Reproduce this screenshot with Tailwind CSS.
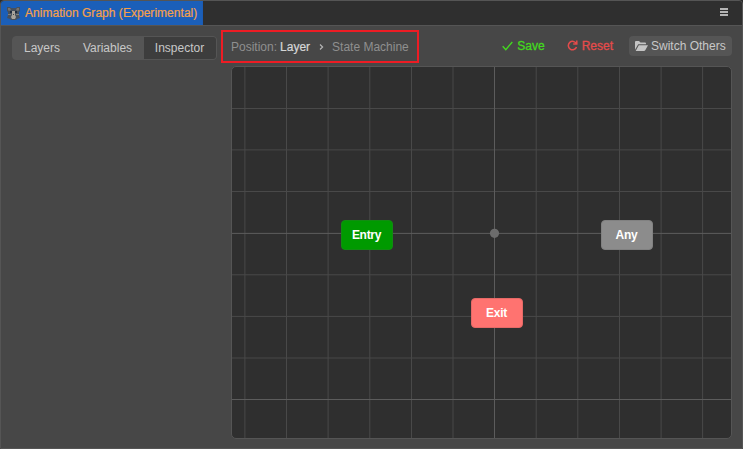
<!DOCTYPE html>
<html lang="en">
<head>
<meta charset="utf-8">
<title>Animation Graph</title>
<script src="https://cdn.jsdelivr.net/npm/@tailwindcss/browser@4"></script>
</head>
<body class="bg-[#2b2b2b] font-['Liberation_Sans',Arial,sans-serif] text-[12px] leading-4 text-[#c8c8c8]">
<div class="flex h-[449px] w-[743px] flex-col overflow-hidden rounded-t border border-[#555] bg-[#474747]">
  <header class="flex h-[25px] shrink-0 items-stretch justify-between border-b border-[#555] bg-[#2f2f2f]">
    <div class="flex w-[202px] items-center gap-[5px] border-r border-[#1b5cb4] bg-[#1b5fb9] pl-[6px] text-[#f5a04a]">
      <svg class="size-[13px] shrink-0" viewBox="0 0 13 13"><path d="M0 0h3l1 1h5l1-1h3v4l-1 1v3l1 3-3 1-1 1H4l-1-1-3-1 1-3V5L0 4z" fill="#47505c"/><path d="M1 1h2l1 2-2 1-1-1zM10 1h2v2l-1 1-2-1z" fill="#77736e"/><path d="M3 4h2v2H3zM8 4h2v2H8z" fill="#202b3b"/><path d="M1 7h3v1H1zM9 7h3v1H9z" fill="#858076"/><path d="M5 4h3v4l1 2-1 2H5l-1-2 1-2z" fill="#aaa49b"/><path d="M6 7h1v1H6z" fill="#444"/></svg>
      <span class="whitespace-nowrap tracking-[0.03px] [-webkit-text-stroke:0.2px]">Animation Graph (Experimental)</span>
    </div>
    <svg class="mt-[7px] mr-[14px] h-[8px] w-[8px]" viewBox="0 0 8 8" fill="#b4b4b4" shape-rendering="crispEdges"><path d="M0 0h8v2H0zM0 3h8v2H0zM0 6h8v2H0z"/></svg>
  </header>
  <div class="flex min-h-0 flex-1">
    <aside class="w-[220px] shrink-0 pt-[10px] pl-[11px]">
      <div class="flex h-6 w-[205px] items-stretch overflow-hidden rounded border border-[#555] bg-[#555]">
        <span class="flex w-[60px] items-center justify-center pr-[2px]">Layers</span>
        <span class="flex w-[71px] items-center justify-center pr-[2px]">Variables</span>
        <span class="flex flex-1 items-center justify-center bg-[#3d3d3d] pr-px">Inspector</span>
      </div>
    </aside>
    <main class="flex flex-1 flex-col">
      <div class="flex h-[40px] items-start justify-between pt-1 pr-[10px]">
        <div class="flex h-[33px] w-[198px] items-center border-2 border-[#ed1c24] pl-2 whitespace-nowrap text-[#8f8f8f]">
          <span>Position:</span><span class="ml-[3px] text-[#d6d6d6] [-webkit-text-stroke:0.2px]">Layer</span>
          <svg class="mr-[8px] ml-[9px] h-[6px] w-[5px]" viewBox="0 0 5 6" fill="none" stroke="#b4b4b4" stroke-width="1.2"><path d="M1 .5 3.6 3 1 5.5"/></svg>
          <span>State Machine</span>
        </div>
        <div class="flex h-5 items-center pt-[6px]">
          <span class="mt-[5px] flex items-center gap-1 text-[#43d91e] [-webkit-text-stroke:0.3px]"><svg class="h-[10px] w-[11px]" viewBox="0 0 11 10" fill="none" stroke="currentColor" stroke-width="1.4"><path d="M.7 5.2 3.8 8.6 10.3 1"/></svg>Save</span>
          <span class="mt-[5px] ml-[22px] flex items-center gap-1 text-[#e54b4b] [-webkit-text-stroke:0.3px]"><svg class="size-[11px]" viewBox="0 0 11 11" fill="none" stroke="currentColor" stroke-width="1.5"><path d="M9.3 3.7A4.2 4.2 0 1 0 9.5 7M9.8.5V4H6.2"/></svg>Reset</span>
          <span class="mt-[5px] ml-[16px] flex h-5 w-[103px] items-center gap-[3px] rounded bg-[#555] pl-[6px] whitespace-nowrap"><svg class="h-[10px] w-[13px]" viewBox="0 0 13 10" fill="#c4c4c4"><path d="M0 8V1q0-1 1-1h3l1.5 1.5H10q1 0 1 1V3.3H3.2L0 8.8zM.7 10 3.8 4.2H13L10.4 9q-.5 1-1.5 1z"/></svg>Switch Others</span>
        </div>
      </div>
      <div class="relative ml-[10px] h-[373px] w-[501px] overflow-hidden rounded-[5px] border border-[#555] bg-[#2f2f2f]">
        <svg class="block h-[371px] w-[499px]" viewBox="232 67 499 371" fill="none">
          <g stroke="#494949">
            <path d="M244.9 67v371M286.5 67v371M328.1 67v371M369.8 67v371M411.5 67v371M453 67v371M536.2 67v371M577.8 67v371M619.5 67v371M661.1 67v371M702.6 67v371"/>
            <path d="M232 108.5h499M232 149.9h499M232 191.5h499M232 274.8h499M232 316.4h499M232 358h499"/>
          </g>
          <path stroke="#5c5c5c" d="M494.5 67v371M232 233.4h499M232 399.5h499"/>
          <circle cx="494.5" cy="233.3" r="4.6" fill="#6c6c6c"/>
        </svg>
        <div class="absolute top-[153px] left-[109px] flex h-[30px] w-[52px] items-center justify-center rounded border border-[#128c12] bg-[#009a00] pr-px font-bold tracking-[-0.3px] text-white">Entry</div>
        <div class="absolute top-[153px] left-[369px] flex h-[30px] w-[52px] items-center justify-center rounded border border-[#818181] bg-[#8c8c8c] pr-px font-bold tracking-[-0.3px] text-white">Any</div>
        <div class="absolute top-[231px] left-[239px] flex h-[30px] w-[52px] items-center justify-center rounded border border-[#e56966] bg-[#ff7370] pr-px font-bold tracking-[-0.3px] text-white">Exit</div>
      </div>
    </main>
  </div>
</div>
</body>
</html>
